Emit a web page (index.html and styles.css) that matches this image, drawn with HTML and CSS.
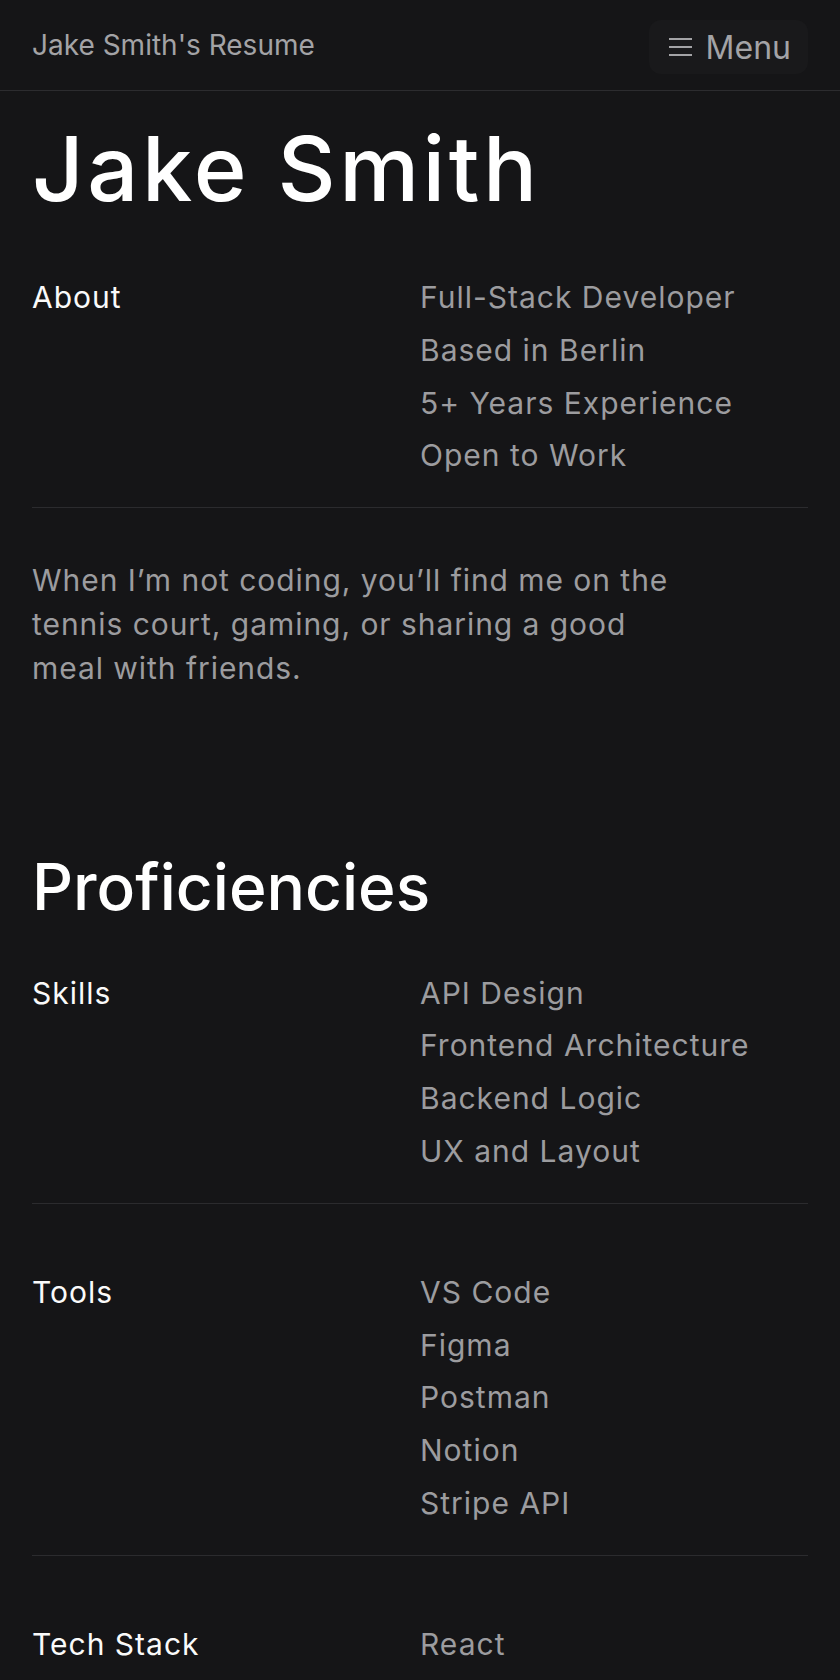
FILE: index.html
```html
<!DOCTYPE html>
<html>
<head>
    <title>Jake Smith's Resume</title>
    <link rel="stylesheet" href="styles.css">
</head>
<body>
    <header class="site-header">
        <a class="site-title" href="#">Jake Smith's Resume</a>
        <button class="menu-btn" type="button">
            <svg class="menu-icon" width="23" height="18" viewBox="0 0 23 18" aria-hidden="true">
                <path d="M0 1h23M0 9h23M0 17h23" stroke="currentColor" stroke-width="2" fill="none"/>
            </svg>
            <span>Menu</span>
        </button>
    </header>

    <main class="page">
        <!-- Intro -->
        <section class="intro">
            <h1>Jake Smith</h1>
            <div class="row">
                <div class="row-label">About</div>
                <ul class="row-values">
                    <li>Full-Stack Developer</li>
                    <li>Based in Berlin</li>
                    <li>5+ Years Experience</li>
                    <li>Open to Work</li>
                </ul>
            </div>
            <p class="bio">When I’m not coding, you’ll find me on the tennis court, gaming, or sharing a good meal with friends.</p>
        </section>

        <!-- Proficiencies -->
        <section class="proficiencies">
            <h2>Proficiencies</h2>
            <div class="row">
                <div class="row-label">Skills</div>
                <ul class="row-values">
                    <li>API Design</li>
                    <li>Frontend Architecture</li>
                    <li>Backend Logic</li>
                    <li>UX and Layout</li>
                </ul>
            </div>
            <div class="row">
                <div class="row-label">Tools</div>
                <ul class="row-values">
                    <li>VS Code</li>
                    <li>Figma</li>
                    <li>Postman</li>
                    <li>Notion</li>
                    <li>Stripe API</li>
                </ul>
            </div>
            <div class="row">
                <div class="row-label">Tech Stack</div>
                <ul class="row-values">
                    <li>React</li>
                    <li>Node.js</li>
                    <li>TypeScript</li>
                    <li>PostgreSQL</li>
                </ul>
            </div>
        </section>
    </main>
</body>
</html>
```

FILE: styles.css
```css
body {
    margin: 0;
    background: #151517;
    color: #f4f4f5;
    font-family: Inter, "Noto Sans", sans-serif;
}
ul {
    list-style: none;
    margin: 0;
    padding: 0;
}

/* Top bar */
.site-header {
    height: 90px;
    display: flex;
    align-items: center;
    justify-content: space-between;
    padding: 0 32px;
    border-bottom: 1px solid #2c2c2f;
}
.site-title {
    color: #a3a3a6;
    font-size: 28px;
    text-decoration: none;
}
.menu-btn {
    display: flex;
    align-items: center;
    gap: 14px;
    height: 54px;
    padding: 0 17px 0 20px;
    margin-top: 4px;
    background: #19191b;
    color: #a3a3a6;
    border: none;
    border-radius: 12px;
    font-family: inherit;
    font-size: 32px;
    cursor: pointer;
}
.menu-icon {
    display: block;
}

/* Content */
.page {
    padding: 0 32px;
}
h1 {
    margin: 28px 0 0;
    font-size: 90px;
    font-weight: 500;
    line-height: 1.1;
    letter-spacing: 3.5px;
    color: #fff;
}
h2 {
    margin: 0;
    font-size: 64px;
    font-weight: 500;
    line-height: 1.1;
    color: #fff;
}
.row {
    display: grid;
    grid-template-columns: 1fr 1fr;
    margin-top: 62px;
    padding-bottom: 25px;
    border-bottom: 1px solid #2b2b2e;
    font-size: 30px;
    line-height: 52.8px;
    letter-spacing: 1px;
}
.intro .row {
    margin-top: 53px;
}
h2 + .row {
    margin-top: 44px;
}
.row-label {
    color: #fafafa;
}
.row-values {
    color: #9c9c9f;
}
.bio {
    max-width: 660px;
    margin: 50px 0 0;
    font-size: 30px;
    line-height: 44px;
    color: #9c9c9f;
    letter-spacing: 0.95px;
}
.proficiencies {
    margin-top: 162px;
}
```
